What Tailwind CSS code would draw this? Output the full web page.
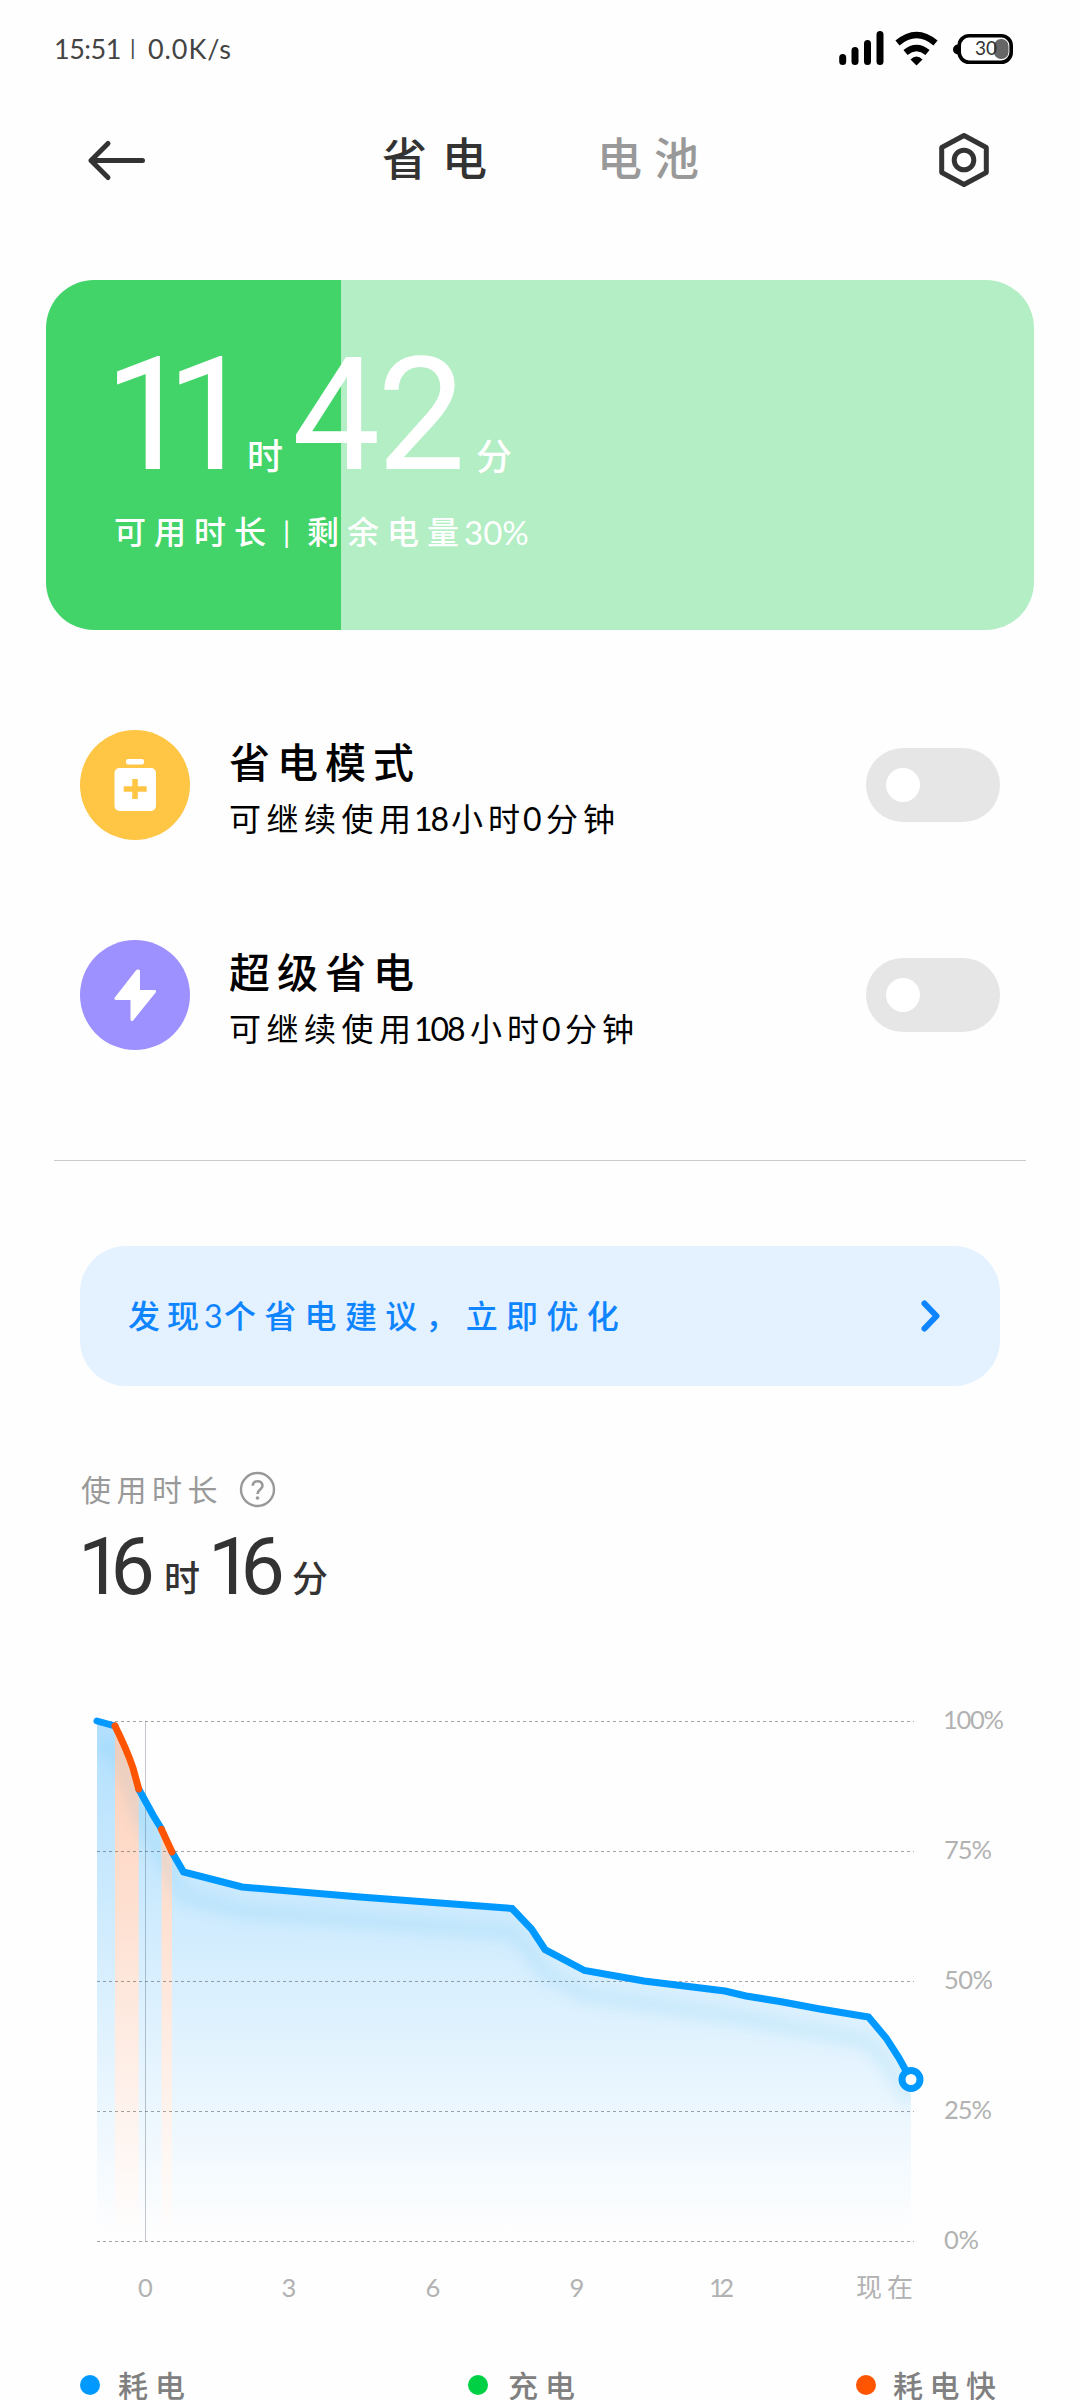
<!DOCTYPE html>
<html lang="zh-CN">
<head>
<meta charset="utf-8">
<meta name="viewport" content="width=1080">
<title>省电</title>
<script src="https://cdn.jsdelivr.net/npm/@tailwindcss/browser@4"></script>
</head>
<body class="w-[1080px] h-[2400px] overflow-hidden bg-[#fefefe] font-['Lato','Noto_Sans_CJK_SC',sans-serif] text-[#333] whitespace-nowrap">

<!-- status bar -->
<header class="flex h-24 items-center justify-between pl-[54px] pr-[66px]">
  <div class="flex text-[27px] leading-none text-[#444]">
    <span class="w-[76px] tracking-[-0.5px]">15:51</span><span class="w-[18px] text-[22px] leading-[24px]">|</span><span class="tracking-[0.9px]">0.0K/s</span>
  </div>
  <svg class="h-14 w-[180px]" viewBox="834 21 180 56" fill="none">
    <g stroke="#000" stroke-width="7" stroke-linecap="round">
      <path d="M842.7 58.5V62.5M855 51.5V62.5M867.5 44.5V62.5M880 35.500V62.5"/>
    </g>
    <path d="M897.500 44Q916.500 28 935.500 44M905.500 53.500Q916.500 44.500 927.500 53.500" stroke="#000" stroke-width="6.500"/>
    <path d="M910.500 60.500Q916.500 54.500 922.500 60.500L916.500 66.500Z" fill="#000"/>
    <path d="M958 45.500a5 5 0 0 0 0 10Z" fill="#000"/>
    <rect x="959.200" y="36.700" width="52" height="26.600" rx="10" stroke="#000" stroke-width="3.600"/>
    <rect x="994" y="40" width="14.500" height="20" rx="7" fill="#666"/>
    <text x="975" y="56" font-size="19" fill="#333" textLength="22" font-family="Lato">30</text>
  </svg>
</header>

<!-- title bar -->
<nav class="flex h-32 items-center pl-[86px] pr-[88px]">
  <svg class="h-12 w-[62px]" viewBox="0 0 62 48" fill="none" stroke="#333" stroke-width="5" stroke-linecap="round" stroke-linejoin="round"><path d="M22 7.500L5 24.500L22 41.500M5 24.500H56.500"/></svg>
  <h1 class="ml-[234px] w-[215px] text-[45px] font-medium tracking-[15px]">省电</h1>
  <span class="text-[45px] font-medium tracking-[12px] text-[#999]">电池</span>
  <svg class="ml-auto h-[56px] w-[56px]" viewBox="0 0 56 56" fill="none" stroke="#333" stroke-width="5" stroke-linejoin="round"><path d="M28 3.500L50.300 15.500V40.500L28 52.500L5.700 40.500V15.500Z"/><circle cx="28" cy="28" r="9.800"/></svg>
</nav>

<!-- remaining time card -->
<section class="mx-[46px] mt-14 h-[350px] rounded-[48px] bg-linear-to-r from-[#42d469] from-[295px] to-[#b3eec5] to-[295px] px-[69px] pt-[78px] text-white">
  <div class="flex h-[130px] items-end font-['Roboto','Noto_Sans_CJK_SC',sans-serif]">
    <span class="w-[135px] text-[157px] leading-[145px] tracking-[-26px] -ml-[11px]">11</span>
    <span class="w-[53px] pl-2 text-[36px] leading-[59px] font-medium">时</span>
    <span class="w-[184px] text-[157px] leading-[145px] tracking-[-3px]">42</span>
    <span class="text-[36px] leading-[59px] font-medium">分</span>
  </div>
  <div class="mt-[24px] flex h-10 items-center text-[32px] font-medium leading-10">
    <span class="-ml-px w-[169px] tracking-[8px]">可用时长</span><span class="w-[24px] text-[28px]">|</span><span class="w-[157px] tracking-[8px]">剩余电量</span><span class="text-[33px] font-normal">30%</span>
  </div>
</section>

<!-- power saving modes -->
<section class="mx-20 mt-[85px] flex h-[140px] items-center">
  <svg class="h-[110px] w-[110px]" viewBox="0 0 110 110"><circle cx="55" cy="55" r="55" fill="#ffc544"/><rect x="46" y="29" width="18" height="5.500" rx="2" fill="#fff"/><rect x="34.500" y="38" width="41.500" height="43" rx="5" fill="#fff"/><path d="M55 49V69M43.700 59H66.700" stroke="#ffc544" stroke-width="5.500"/></svg>
  <div class="ml-[39px] pt-[7px]">
    <h2 class="h-[60px] text-[41px] font-medium leading-[46px] tracking-[7px] text-black">省电模式</h2>
    <div class="flex text-[32px] leading-[38px] text-black">
      <span class="w-[185px] tracking-[5.500px]">可继续使用</span><span class="w-[37px] tracking-[-2px]">18</span><span class="w-[72px] tracking-[5px]">小时</span><span class="w-[23px]">0</span><span class="tracking-[5px]">分钟</span>
    </div>
  </div>
  <div class="ml-auto flex h-[74px] w-[134px] items-center rounded-full bg-[#e6e6e6] pl-5"><i class="h-[34px] w-[34px] rounded-full bg-white"></i></div>
</section>
<section class="mx-20 mt-[70px] flex h-[140px] items-center">
  <svg class="h-[110px] w-[110px]" viewBox="0 0 110 110"><circle cx="55" cy="55" r="55" fill="#9d91ff"/><path d="M57.500 31L36 58.500H52V79.500L74.500 51.500H58.500V31Z" fill="#fff" stroke="#fff" stroke-width="3" stroke-linejoin="round"/></svg>
  <div class="ml-[39px] pt-[7px]">
    <h2 class="h-[60px] text-[41px] font-medium leading-[46px] tracking-[7px] text-black">超级省电</h2>
    <div class="flex text-[32px] leading-[38px] text-black">
      <span class="w-[185px] tracking-[5.500px]">可继续使用</span><span class="w-[56px] tracking-[-2px]">108</span><span class="w-[72px] tracking-[5px]">小时</span><span class="w-[23px]">0</span><span class="tracking-[5px]">分钟</span>
    </div>
  </div>
  <div class="ml-auto flex h-[74px] w-[134px] items-center rounded-full bg-[#e6e6e6] pl-5"><i class="h-[34px] w-[34px] rounded-full bg-white"></i></div>
</section>

<hr class="mx-[54px] mt-[95px] border-[#ccc]">

<!-- suggestions -->
<a class="mx-20 mt-[85px] flex h-[140px] items-center rounded-[46px] bg-[#e4f1ff] pl-[48px] pr-[56px] text-[32px] font-medium text-[#0e84ff]">
  <span class="w-[76px] tracking-[7px]">发现</span><span class="w-[20px] font-normal">3</span><span class="tracking-[8.300px]">个省电建议，立即优化</span>
  <svg class="ml-auto h-10 w-6" viewBox="0 0 24 40" fill="none" stroke="#0e84ff" stroke-width="6" stroke-linecap="round" stroke-linejoin="round"><path d="M4.500 7.500L16.500 20L4.500 32.500"/></svg>
</a>

<!-- usage time -->
<section class="mx-20 mt-[79px]">
  <div class="flex h-12 items-center text-[30px] leading-10 text-[#999]">
    <span class="w-[159px] pl-px tracking-[5.500px]">使用时长</span>
    <svg class="h-[37px] w-[37px]" viewBox="0 0 37 37" fill="none"><circle cx="18.500" cy="18.500" r="16.500" stroke="#999" stroke-width="2.400"/><path d="M13.700 14.800C13.700 8.700 23.500 8.700 23.500 14.700C23.500 18.500 18.500 18.700 18.500 23" stroke="#999" stroke-width="2.600"/><circle cx="18.500" cy="27" r="1.800" fill="#999"/></svg>
  </div>
  <div class="flex h-[90px] items-end font-['Roboto','Noto_Sans_CJK_SC',sans-serif]">
    <span class="w-[83px] text-[79px] leading-[72px] tracking-[-12px] -ml-0.5">16</span>
    <span class="w-[47px] pl-[3px] text-[36px] leading-[45px] font-medium">时</span>
    <span class="w-[84px] text-[79px] leading-[72px] tracking-[-12px]">16</span>
    <span class="text-[36px] leading-[45px] font-medium">分</span>
  </div>
</section>

<!-- battery history chart -->
<figure class="mt-[71px] h-[654px]">
<svg class="h-[654px] w-[1080px]" viewBox="0 1674 1080 654" fill="none">
  <defs>
    <linearGradient id="blue" gradientUnits="userSpaceOnUse" x1="0" y1="1721" x2="0" y2="2235"><stop stop-color="#0099ff" stop-opacity=".3"/><stop offset="1" stop-color="#0099ff" stop-opacity="0"/></linearGradient>
    <linearGradient id="hot" gradientUnits="userSpaceOnUse" x1="0" y1="1721" x2="0" y2="2235"><stop stop-color="#ff5500" stop-opacity=".28"/><stop offset="1" stop-color="#ff5500" stop-opacity="0"/></linearGradient>
    <filter id="soft" filterUnits="userSpaceOnUse" x="60" y="1680" width="900" height="480"><feGaussianBlur stdDeviation="7"/></filter>
    <clipPath id="area"><path id="shape" d="M97 1721L115 1726L133 1768L138.700 1789L153 1815L161.500 1829L172 1852L183.500 1872L242 1887L360 1897L512 1908.500L531.500 1929L545 1949.500L584.500 1970.500L644 1981L725 1991L746 1996L780 2001.500L820 2009L868.500 2017L886.500 2038.500L899 2058L911 2080V2241H97Z"/></clipPath>
  </defs>
  <g clip-path="url(#area)">
    <path d="M97 1721H115V2241H97ZM138.700 1721H161.500V2241H138.700ZM172 1721H911V2241H172Z" fill="url(#blue)"/>
    <path d="M115 1721H138.700V2241H115ZM161.500 1721H172V2241H161.500Z" fill="url(#hot)"/>
    <path transform="translate(0 24)" d="M97 1721L115 1726L133 1768L138.700 1789L172 1852L183.500 1872L242 1887L512 1908.500L531.500 1929L545 1949.500L584.500 1970.500L725 1991L868.500 2017L886.500 2038.500L911 2080" stroke="#0096dc" stroke-opacity=".09" stroke-width="16" filter="url(#soft)"/>
  </g>
  <path d="M97 1721.500H914M97 1851.500H914M97 1981.500H914M97 2111.500H914M97 2241.500H914" stroke="#000" stroke-opacity=".35" stroke-dasharray="3 3"/>
  <path d="M145.500 1721V2241" stroke="#445566" stroke-opacity=".33"/>
  <g stroke-width="7" stroke-linejoin="miter" stroke-linecap="round">
    <path d="M97 1721L115 1726M138.700 1789L153 1815L161.500 1829M172 1852L183.500 1872L242 1887L360 1897L512 1908.500L531.500 1929L545 1949.500L584.500 1970.500L644 1981L725 1991L746 1996L780 2001.500L820 2009L868.500 2017L886.500 2038.500L899 2058L911 2080" stroke="#0099ff"/>
    <path d="M115 1726Q127 1750 133 1768L138.700 1789M161.500 1829.500L172 1852" stroke="#ff5500"/>
  </g>
  <circle cx="911" cy="2079.500" r="9" fill="#fff" stroke="#0099ff" stroke-width="7"/>
  <g fill="#b2b2b2" font-family="Lato" font-size="25.500">
    <text x="943" y="1729" textLength="61">100%</text>
    <text x="944" y="1859" textLength="48">75%</text>
    <text x="944" y="1989" textLength="49">50%</text>
    <text x="944" y="2119" textLength="48">25%</text>
    <text x="944" y="2249" textLength="35">0%</text>
    <g text-anchor="middle">
      <text x="145.500" y="2297">0</text><text x="289" y="2297">3</text><text x="433" y="2297">6</text><text x="577" y="2297">9</text><text x="721.500" y="2297" textLength="25">12</text>
      <text x="884.500" y="2297" font-family="Noto Sans CJK SC" font-size="26" textLength="57">现在</text>
    </g>
  </g>
</svg>
</figure>

<!-- legend -->
<footer class="mx-20 mt-[37px] flex h-10 items-center text-[30px] font-medium leading-10 tracking-[7px] text-[#808080]">
  <span class="flex w-[388px] shrink-0 items-center gap-[18px]"><i class="h-5 w-5 rounded-full bg-[#0099ff]"></i>耗电</span>
  <span class="flex w-[388px] shrink-0 items-center gap-[20px]"><i class="h-5 w-5 rounded-full bg-[#00d044]"></i>充电</span>
  <span class="flex shrink-0 items-center gap-[17px] tracking-[6.500px]"><i class="h-5 w-5 rounded-full bg-[#ff5500]"></i>耗电快</span>
</footer>
</body>
</html>
